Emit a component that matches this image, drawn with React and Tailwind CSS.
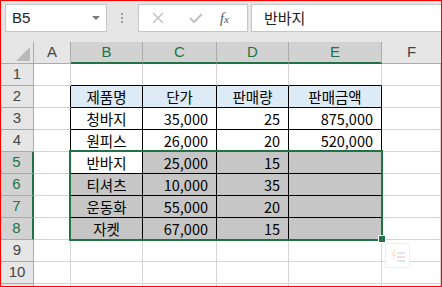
import React from "react";

const cols = [
  { key: "A", w: "w-[37px]" },
  { key: "B", w: "w-[72px]" },
  { key: "C", w: "w-[74px]" },
  { key: "D", w: "w-[72px]" },
  { key: "E", w: "w-[93px]" },
  { key: "F", w: "w-[59px]" },
];

const table = [
  ["제품명", "단가", "판매량", "판매금액"],
  ["청바지", "35,000", "25", "875,000"],
  ["원피스", "26,000", "20", "520,000"],
  ["반바지", "25,000", "15", ""],
  ["티셔츠", "10,000", "35", ""],
  ["운동화", "55,000", "20", ""],
  ["자켓", "67,000", "15", ""],
];

const font = "font-['Noto_Sans_CJK_KR','Noto_Sans',sans-serif]";

function Cell({ row, col, width }) {
  const inTable = row >= 2 && row <= 8 && col >= 1 && col <= 4;
  const selected = row >= 5 && row <= 8 && col >= 1 && col <= 4;
  const active = row === 5 && col === 1;
  const leftOfTable = row >= 2 && row <= 8 && col === 0;
  const aboveTable = row === 1 && col >= 1 && col <= 4;

  let text = "";
  if (inTable) text = table[row - 2][col - 1];

  const right = inTable || leftOfTable ? "border-r-black" : "border-r-[#d4d4d4]";
  const bottom = inTable || aboveTable ? "border-b-black" : "border-b-[#d4d4d4]";
  let bg = "bg-white";
  if (row === 2 && inTable) bg = "bg-[#ddebf7]";
  if (selected && !active) bg = "bg-[#c6c6c6]";

  const align = col === 1 || row === 2 ? "justify-center" : "justify-end pr-[8px]";

  return (
    <div
      className={`${width} h-[22px] shrink-0 border-r border-b ${right} ${bottom} ${bg} flex items-center ${align} text-[14.5px] text-black ${font}`}
    >
      {text}
    </div>
  );
}

export default function App() {
  const rows = [1, 2, 3, 4, 5, 6, 7, 8, 9, 10, 11];

  return (
    <div className="w-[442px] h-[287px] border border-[#ff0000] bg-white overflow-hidden font-['Liberation_Sans',sans-serif]">
      <div className="relative w-[440px] h-[285px] overflow-hidden">
        {/* formula bar */}
        <div className="h-[41px] bg-[#e6e6e6] flex items-start pt-[3px] pl-[4px]">
          <div className="w-[102px] h-[28px] bg-white border border-[#c6c6c6] flex items-center justify-between pl-[6px] pr-[6px]">
            <span className="text-[15px] text-[#222]">B5</span>
            <span className="w-0 h-0 border-l-[4px] border-r-[4px] border-t-[4px] border-l-transparent border-r-transparent border-t-[#777]" />
          </div>
          <div className="w-[30px] h-[28px] flex flex-col items-center justify-center gap-[2px]">
            <span className="w-[2px] h-[2px] bg-[#a0a0a0]" />
            <span className="w-[2px] h-[2px] bg-[#a0a0a0]" />
            <span className="w-[2px] h-[2px] bg-[#a0a0a0]" />
          </div>
          <div className="w-[110px] h-[28px] bg-white border border-[#c6c6c6] flex items-center ml-[1px]">
            <svg width="14" height="14" viewBox="0 0 14 14" className="ml-[12px]">
              <path d="M2 2 L12 12 M12 2 L2 12" stroke="#c0c0c0" strokeWidth="1.4" />
            </svg>
            <svg width="16" height="14" viewBox="0 0 16 14" className="ml-[23px]">
              <path d="M2 7 L6 11 L14 3" stroke="#c0c0c0" strokeWidth="2" fill="none" />
            </svg>
            <span className="ml-[16px] text-[14px] italic text-[#555] font-['Liberation_Serif',serif]">
              f<span className="text-[11px]">x</span>
            </span>
          </div>
          <div className="flex-1 h-[28px] bg-white border border-[#c6c6c6] ml-[3px] mr-[-4px] flex items-center pl-[12px]">
            <span className={`text-[15px] text-[#222] ${font}`}>반바지</span>
          </div>
        </div>

        {/* column headers */}
        <div className="flex h-[22px]">
          <div className="w-[33px] h-[22px] bg-[#e6e6e6] border-r border-b border-[#ababab] flex items-end justify-end pr-[3px] pb-[2px]">
            <svg width="14" height="14" viewBox="0 0 14 14">
              <path d="M14 0 L14 14 L0 14 Z" fill="#b9b9b9" />
            </svg>
          </div>
          {cols.map((c, i) => {
            const sel = i >= 1 && i <= 4;
            return (
              <div
                key={c.key}
                className={`${c.w} h-[22px] shrink-0 flex items-center justify-center text-[15px] border-r ${
                  sel
                    ? "bg-[#d2d2d2] text-[#217346] border-r-[#ababab] border-b-2 border-b-[#217346]"
                    : "bg-[#e6e6e6] text-[#444] border-r-[#ababab] border-b border-b-[#ababab]"
                } ${i === 5 ? "border-r-0" : ""}`}
              >
                {c.key}
              </div>
            );
          })}
        </div>

        {/* rows */}
        {rows.map((r) => {
          const sel = r >= 5 && r <= 8;
          return (
            <div key={r} className="flex h-[22px]">
              <div
                className={`w-[33px] h-[22px] shrink-0 flex items-center justify-center text-[15px] border-b border-b-[#ababab] ${
                  sel
                    ? "bg-[#d2d2d2] text-[#217346] border-r-2 border-r-[#217346]"
                    : "bg-[#e6e6e6] text-[#444] border-r border-r-[#ababab]"
                }`}
              >
                {r <= 10 ? r : ""}
              </div>
              {cols.map((c, i) => (
                <Cell key={c.key} row={r} col={i} width={c.w} />
              ))}
            </div>
          );
        })}

        {/* selection */}
        <div className="absolute left-[68px] top-[149px] w-[314px] h-[91px] border-2 border-[#217346] pointer-events-none" />
        <div className="absolute left-[377px] top-[234px] w-[8px] h-[8px] bg-[#217346] border border-white" />

        {/* quick analysis */}
        <div className="absolute left-[384px] top-[242px] w-[25px] h-[25px] border border-[#eef2f3] bg-white flex items-center justify-center">
          <svg width="18" height="16" viewBox="0 0 18 16" className="opacity-25">
            <path d="M5 1 L2 8 L5 8 L3 14 L8 6 L5 6 L7 1 Z" fill="#f0b04a" />
            <rect x="8" y="4" width="8" height="2" fill="#7ea6d8" />
            <rect x="8" y="8" width="8" height="2" fill="#d87e7e" />
            <rect x="8" y="12" width="8" height="2" fill="#7ea6d8" />
          </svg>
        </div>
      </div>
    </div>
  );
}
